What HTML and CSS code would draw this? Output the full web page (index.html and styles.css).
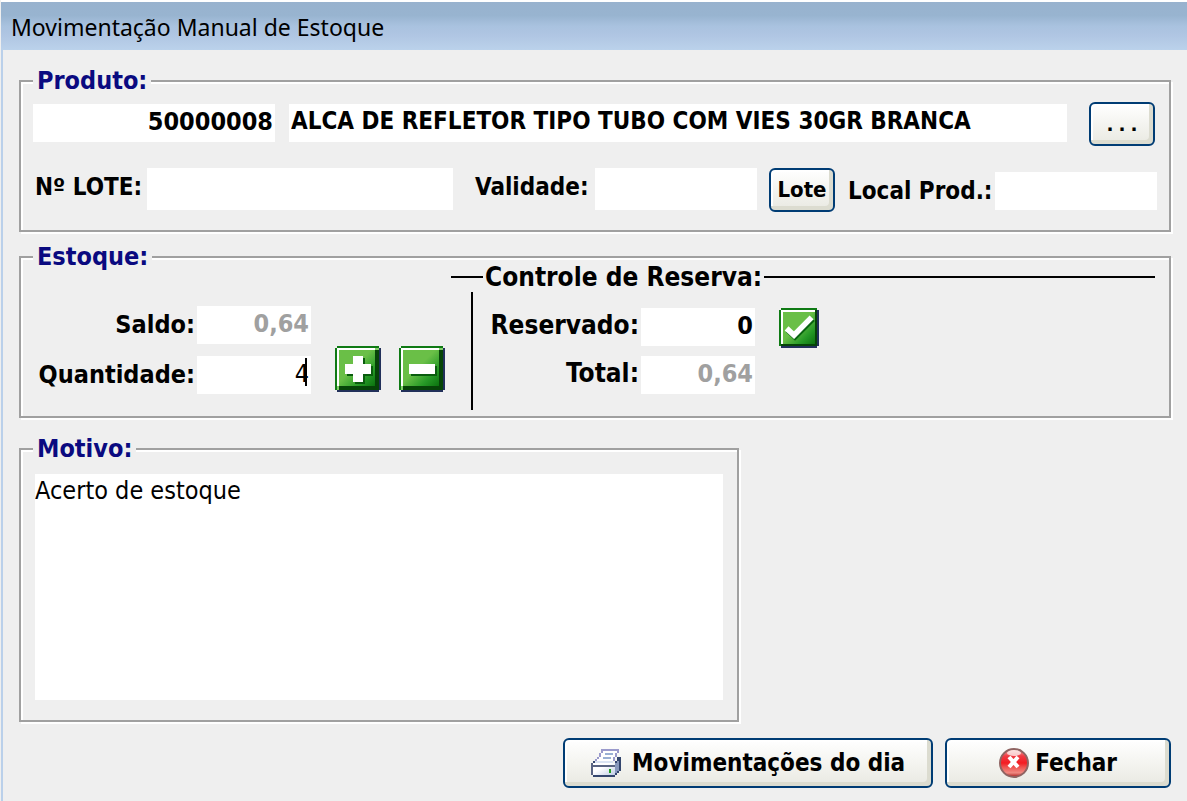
FILE: index.html
```html
<!DOCTYPE html>
<html lang="pt-BR">
<head>
<meta charset="utf-8">
<title>Movimentação Manual de Estoque</title>
<link rel="stylesheet" href="styles.css">
</head>
<body>
<svg class="defs" width="0" height="0" aria-hidden="true">
  <defs>
    <linearGradient id="green" x1="0" y1="0" x2="1" y2="1">
      <stop offset="0.45" stop-color="#6abf47"/>
      <stop offset="0.75" stop-color="#279a27"/>
      <stop offset="1" stop-color="#0b720f"/>
    </linearGradient>
    <linearGradient id="red" x1="0" y1="0" x2="0" y2="1">
      <stop offset="0" stop-color="#f0b0a8"/>
      <stop offset="0.25" stop-color="#f03c44"/>
      <stop offset="0.5" stop-color="#f41c22"/>
      <stop offset="0.65" stop-color="#ee5450"/>
      <stop offset="0.85" stop-color="#f08a82"/>
      <stop offset="1" stop-color="#a81818"/>
    </linearGradient>
    <linearGradient id="paper" x1="0" y1="0" x2="1" y2="1">
      <stop offset="0.4" stop-color="#ffffff"/>
      <stop offset="1" stop-color="#c0cde6"/>
    </linearGradient>
  </defs>
</svg>
<header class="titlebar"><h1 class="title">Movimentação Manual de Estoque</h1></header>
<main class="window">
  <form class="form">
    <fieldset class="group group-product">
      <legend class="legend">Produto:</legend>
      <div class="row row-product">
        <input class="field code" type="text" value="50000008" aria-label="Código do produto">
        <input class="field name" type="text" value="ALCA DE REFLETOR TIPO TUBO COM VIES 30GR BRANCA" aria-label="Nome do produto">
        <button class="button small browse" type="button" aria-label="Procurar">...</button>
      </div>
      <div class="row row-batch">
        <label class="label batch-label" for="lote">Nº LOTE:</label>
        <input class="field tall batch" id="lote" type="text">
        <label class="label expiry-label" for="validade">Validade:</label>
        <input class="field tall short" id="validade" type="text">
        <button class="button small batch-button" type="button">Lote</button>
        <label class="label place-label" for="local">Local Prod.:</label>
        <input class="field short place" id="local" type="text">
      </div>
    </fieldset>

    <fieldset class="group group-stock">
      <legend class="legend">Estoque:</legend>
      <div class="stock">
        <div class="balance">
          <div class="pairs pairs-balance">
            <label class="label" for="saldo">Saldo:</label>
            <input class="field number" id="saldo" type="text" value="0,64" disabled>
            <label class="label" for="quantidade">Quantidade:</label>
            <div class="caret-box">
              <input class="field number editing" id="quantidade" type="text" value="4">
              <span class="caret"></span>
            </div>
          </div>
          <div class="steps">
            <button class="icon-button" type="button" aria-label="Somar">
              <svg width="46" height="46" viewBox="0 0 23 23" shape-rendering="crispEdges">
                <path fill="#22305a" d="M22 1h1v21h-1v1H1v-1h21z"/>
                <path fill="#0f7a14" d="M1 0h21v1H1v21H0V1h1z"/>
                <path fill="#064408" d="M20 1h2v21H1v-2h19z"/>
                <path fill="#fff" d="M1 1h19v1H2v18H1z"/>
                <path fill="#82d06a" d="M20 1h2v1h-2zM1 20h1v2H1z"/>
                <rect x="2" y="2" width="18" height="18" fill="url(#green)"/>
                <path fill="#0a5c0e" d="M10 6h5v4h4v5h-4v4h-5v-4H6v-5h4z"/>
                <path fill="#fff" d="M9 5h5v4h4v5h-4v4H9v-4H5V9h4z"/>
              </svg>
            </button>
            <button class="icon-button" type="button" aria-label="Subtrair">
              <svg width="46" height="46" viewBox="0 0 23 23" shape-rendering="crispEdges">
                <path fill="#22305a" d="M22 1h1v21h-1v1H1v-1h21z"/>
                <path fill="#0f7a14" d="M1 0h21v1H1v21H0V1h1z"/>
                <path fill="#064408" d="M20 1h2v21H1v-2h19z"/>
                <path fill="#fff" d="M1 1h19v1H2v18H1z"/>
                <path fill="#82d06a" d="M20 1h2v1h-2zM1 20h1v2H1z"/>
                <rect x="2" y="2" width="18" height="18" fill="url(#green)"/>
                <path fill="#0a5c0e" d="M6 10h13v5H6z"/>
                <path fill="#fff" d="M5 9h13v5H5z"/>
              </svg>
            </button>
          </div>
        </div>
        <section class="reserve">
          <h2 class="reserve-title">Controle de Reserva:</h2>
          <div class="reserve-body">
            <div class="pairs pairs-reserve">
              <label class="label" for="reservado">Reservado:</label>
              <input class="field number" id="reservado" type="text" value="0">
              <label class="label" for="total">Total:</label>
              <input class="field number" id="total" type="text" value="0,64" disabled>
            </div>
            <button class="icon-button" type="button" aria-label="Confirmar reserva">
              <svg width="40" height="40" viewBox="0 0 20 20">
                <g shape-rendering="crispEdges">
                  <path fill="#22305a" d="M19 1h1v18h-1v1H1v-1h18z"/>
                  <path fill="#0f7a14" d="M1 0h18v1H1v18H0V1h1z"/>
                  <path fill="#064408" d="M18 1h1v18H1v-1h17z"/>
                  <path fill="#fff" d="M1 1h17v1H2v16H1z"/>
                  <rect x="2" y="2" width="16" height="16" fill="url(#green)"/>
                </g>
                <path fill="none" stroke="#0a6410" stroke-width="2.6" d="M4.4 11.2l3.6 3.4 9-9"/>
                <path fill="none" stroke="#fff" stroke-width="2.8" d="M3.8 10.2l3.7 3.4 8.8-8.9"/>
              </svg>
            </button>
          </div>
        </section>
      </div>
    </fieldset>

    <fieldset class="group group-reason">
      <legend class="legend"><label for="motivo">Motivo:</label></legend>
      <textarea class="reason" id="motivo">Acerto de estoque</textarea>
    </fieldset>

    <footer class="actions">
      <button class="button large print" type="button">
        <svg width="30" height="28" viewBox="0 0 15 14" shape-rendering="crispEdges" aria-hidden="true">
          <path fill="#9a9acc" d="M5 0h9v2h-1v2h-1v2H2V5h1V4h1V2h1z"/>
          <path fill="#fff" d="M6 1h7v1h-1v2h-1v2H3V5h1V4h1V2h1z"/>
          <path fill="#9ab0d4" d="M7 2h4v1H7zM6 4h4v1H6z"/>
          <path fill="#34466e" d="M13 4h2v7h-1v1h-1v1h-1v1H1v-1H0V7h1V6h1v1h10V6h1z"/>
          <path fill="#8798bc" d="M12 7h1v5h-1zM13 6h1v5h-1z"/>
          <path fill="#5a6482" d="M0 7h1v6H0z"/>
          <path fill="#dbe4f3" d="M2 6h9v1H2z"/>
          <path fill="url(#paper)" d="M1 7h11v6H1z"/>
          <path fill="#5a6482" d="M1 8h11v1H1z"/>
          <path fill="#23a020" d="M9 10h1v2H9z"/>
        </svg>
        <span>Movimentações do dia</span>
      </button>
      <button class="button large close" type="button">
        <svg width="30" height="30" viewBox="0 0 30 30" aria-hidden="true">
          <circle cx="15" cy="15" r="14" fill="url(#red)" stroke="#8f6462" stroke-width="2"/>
          <ellipse cx="15" cy="5" rx="7" ry="3" fill="#fff" fill-opacity="0.7"/>
          <path stroke="#fff" stroke-width="4" d="M10 9l9 10M19 9l-9 10"/>
        </svg>
        <span>Fechar</span>
      </button>
    </footer>
  </form>
</main>
</body>
</html>
```
FILE: styles.css
```css
* {
  box-sizing: border-box;
}

body {
  margin: 0;
  min-height: 100vh;
  display: flex;
  flex-direction: column;
  background: #efefef;
  color: #000;
  font: bold 25px/30px "DejaVu Sans Condensed", "DejaVu Sans", sans-serif;
}

input,
button,
textarea {
  font: inherit;
  color: inherit;
}

.defs {
  position: absolute;
}

.titlebar {
  height: 50px;
  margin-left: 1px;
  padding: 2px 10px 0;
  border-top: 2px solid #fff;
  background: linear-gradient(#98b2ce 0%, #98b4d0 28%, #a9c2df 50%, #b0c6e3 70%, #bbd2eb 100%);
}

.title {
  margin: 0;
  font: 400 23px/46px "Noto Sans", "Open Sans", sans-serif;
}

.window {
  flex: 1;
  margin-left: 1px;
  padding: 21px 16px 13px;
  border-left: 2px solid #bad0ea;
}

.form {
  display: flex;
  flex-direction: column;
}

.group {
  margin: 0;
  min-width: 0;
  border: 2px solid #a0a0a0;
  box-shadow: 2px 2px 0 #fff, inset 2px 2px 0 #fff;
}

.legend {
  padding: 0 4px;
  line-height: 20px;
  background: #efefef;
  color: #0a0a80;
}

.group-product {
  padding: 11px 12px 16px;
}

.group-stock {
  margin-top: 15px;
  padding: 0 14px 6px 12px;
}

.group-reason {
  width: 62.5%;
  margin-top: 21px;
  padding: 15px 14px 20px;
}

.group-reason .legend {
  margin-left: -2px;
}

.row {
  display: flex;
  align-items: flex-start;
}

.row-product {
  padding: 0 2px 0 0;
}

.row-product .field {
  margin-top: 2px;
}

.row-batch {
  margin-top: 22px;
  padding-left: 2px;
}

.field {
  display: block;
  min-width: 0;
  height: 38px;
  padding: 0 2px 4px;
  border: 0;
  background: #fff;
  outline: 0;
}

.field:disabled {
  color: #a0a0a0;
}

.tall {
  height: 42px;
}

.code {
  width: 242px;
  margin-right: 14px;
  text-align: right;
}

.name {
  flex: 1;
  margin-right: 22px;
  font-size: 24px;
}

.label {
  line-height: 38px;
  white-space: nowrap;
}

.row-batch .label {
  width: 112px;
  font-size: 24px;
}

.batch {
  flex: 1;
}

.row-batch .expiry-label {
  width: 120px;
  margin-left: 22px;
}

.short {
  width: 162px;
}

.batch-button {
  margin-left: 12px;
}

.row-batch .place-label {
  width: 147px;
  margin-left: 13px;
  line-height: 46px;
}

.place {
  margin-top: 4px;
}

.button {
  display: flex;
  align-items: center;
  justify-content: center;
  border: 2px solid #003c74;
  border-radius: 6px;
  background: linear-gradient(#fff, #f4f4f0 50%, #e9e9e2);
  box-shadow: inset -4px -4px 0 #dcdcd0, inset 2px 2px 0 #fff;
}

.small {
  flex: none;
  width: 66px;
  height: 44px;
  padding: 0;
}

.browse {
  font-family: "DejaVu Sans Mono", monospace;
  font-size: 20px;
}

.batch-button {
  font-size: 22px;
}

.large {
  height: 50px;
  gap: 11px;
  padding: 0 26px;
  font-size: 24px;
}

.close {
  gap: 6px;
  padding: 0 52px;
}

.stock {
  display: flex;
  align-items: flex-start;
}

.balance {
  display: flex;
  align-items: flex-end;
  gap: 24px;
  padding-top: 39px;
}

.pairs {
  display: grid;
  column-gap: 2px;
}

.pairs .label {
  text-align: right;
}

.pairs-balance {
  grid-template-columns: 162px 114px;
  row-gap: 12px;
}

.pairs-reserve {
  grid-template-columns: 166px 114px;
  row-gap: 10px;
}

.pairs-reserve .label {
  font-size: 26px;
  line-height: 34px;
}

.number {
  width: 100%;
  text-align: right;
}

.editing {
  font-weight: 400;
}

.caret-box {
  position: relative;
}

.caret {
  position: absolute;
  top: 2px;
  right: 4px;
  width: 2px;
  height: 28px;
  background: #000;
}

.steps {
  display: flex;
  gap: 18px;
  padding-bottom: 2px;
}

.icon-button {
  display: block;
  padding: 0;
  border: 0;
  background: none;
}

.icon-button svg {
  display: block;
}

.reserve {
  flex: 1;
  margin-left: 6px;
}

.reserve-title {
  display: flex;
  align-items: center;
  gap: 2px;
  margin: 0;
  font-size: 26px;
  line-height: 20px;
}

.reserve-title::before,
.reserve-title::after {
  content: "";
  width: 32px;
  height: 2px;
  background: #000;
}

.reserve-title::after {
  flex: 1;
}

.reserve-body {
  display: flex;
  align-items: flex-start;
  gap: 24px;
  margin: 5px 0 0 20px;
  padding: 16px 0;
  border-left: 2px solid #000;
}

.reason {
  display: block;
  width: 100%;
  height: 226px;
  padding: 2px 0;
  border: 0;
  outline: 0;
  resize: none;
  background: #fff;
  font-weight: 400;
}

.actions {
  display: flex;
  justify-content: flex-end;
  gap: 12px;
  margin-top: 16px;
}
```
